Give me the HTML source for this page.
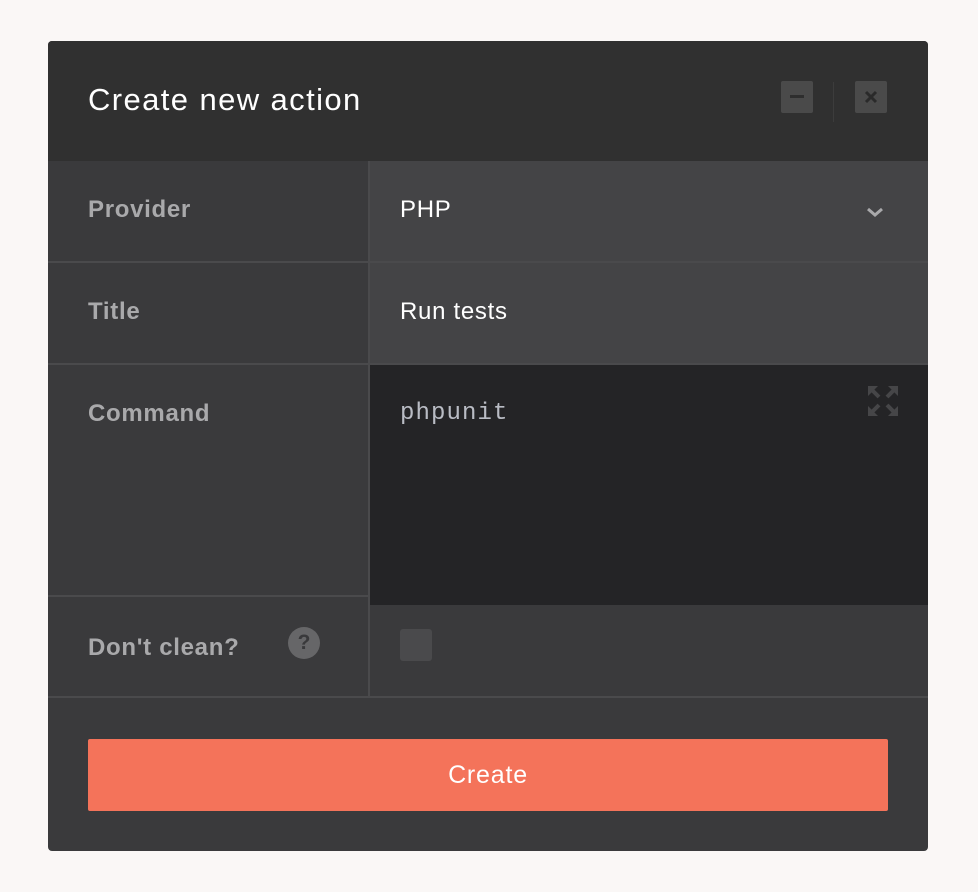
<!DOCTYPE html>
<html><head><style>
body{margin:0;width:978px;height:892px;background:#faf7f6;font-family:"Liberation Sans",sans-serif;position:relative;overflow:hidden}
.m{position:absolute;left:48px;top:41px;width:880px;height:810px;background:#3a3a3c;border-radius:4px;overflow:hidden}
.h{position:absolute;left:0;top:0;width:880px;height:120px;background:#303030}
.h .t{position:absolute;left:40px;top:41px;font-size:31px;color:#fff;letter-spacing:1.4px}
.btn{position:absolute;top:40px;width:32px;height:32px;background:#4a4a4a;border-radius:2px}
.lab{position:absolute;left:40px;font-size:24px;font-weight:bold;color:#a9a9ab;letter-spacing:0.7px}
.val{position:absolute;left:352px;font-size:24px;color:#fff;letter-spacing:0.7px}
.hl{position:absolute;left:0;width:880px;height:2px;background:#4a4a4c}
</style></head><body>
<div class="m">
<div class="h"><div class="t">Create new action</div>
<div class="btn" style="left:733px"><div style="position:absolute;left:9px;top:14px;width:14px;height:3px;background:#2e2e2e"></div></div>
<div style="position:absolute;left:785px;top:41px;width:1px;height:40px;background:#3c3c3c"></div>
<div class="btn" style="left:807px"><svg width="32" height="32"><path d="M11 11L21 21M21 11L11 21" stroke="#2a2a2a" stroke-width="3"/></svg></div>
</div>
<div style="position:absolute;left:322px;top:120px;width:558px;height:203px;background:#444446"></div>
<div style="position:absolute;left:322px;top:324px;width:558px;height:240px;background:#242426"></div>
<div style="position:absolute;left:320px;top:120px;width:2px;height:537px;background:#4a4a4c"></div>
<div class="hl" style="top:220px"></div>
<div class="hl" style="top:322px"></div>
<div class="hl" style="top:554px;width:322px"></div>
<div class="hl" style="top:655px"></div>
<div class="lab" style="top:155px">Provider</div>
<div class="lab" style="top:257px">Title</div>
<div class="lab" style="top:359px">Command</div>
<div class="lab" style="top:593px">Don't clean?</div>
<div style="position:absolute;left:240px;top:586px;width:32px;height:32px;border-radius:50%;background:#666668;color:#39393b;font-weight:bold;font-size:21px;text-align:center;line-height:32px">?</div>
<div class="val" style="top:155px">PHP</div>
<svg style="position:absolute;left:818px;top:165px" width="18" height="12"><path d="M2 3L9 9L16 3" stroke="#a9a9ab" stroke-width="3" fill="none"/></svg>
<div class="val" style="top:257px">Run tests</div>
<div style="position:absolute;left:352px;top:359px;font-family:'Liberation Mono',monospace;font-size:24px;color:#b9bcc4;letter-spacing:1.1px">phpunit</div>
<svg style="position:absolute;left:820px;top:345px" width="30" height="30"><g stroke="#464648" stroke-width="4" fill="none"><path d="M2 2L11 11M28 2L19 11M2 28L11 19M28 28L19 19"/></g><g fill="#464648"><path d="M0 0H10L0 10Z M30 0H20L30 10Z M0 30H10L0 20Z M30 30H20L30 20Z"/></g></svg>
<div style="position:absolute;left:352px;top:588px;width:32px;height:32px;border-radius:3px;background:#4a4a4c"></div>
<div style="position:absolute;left:40px;top:698px;width:800px;height:72px;background:#f4735a;border-radius:2px;color:#fff;font-size:25px;letter-spacing:0.8px;text-align:center;line-height:72px">Create</div>
</div>
</body></html>
